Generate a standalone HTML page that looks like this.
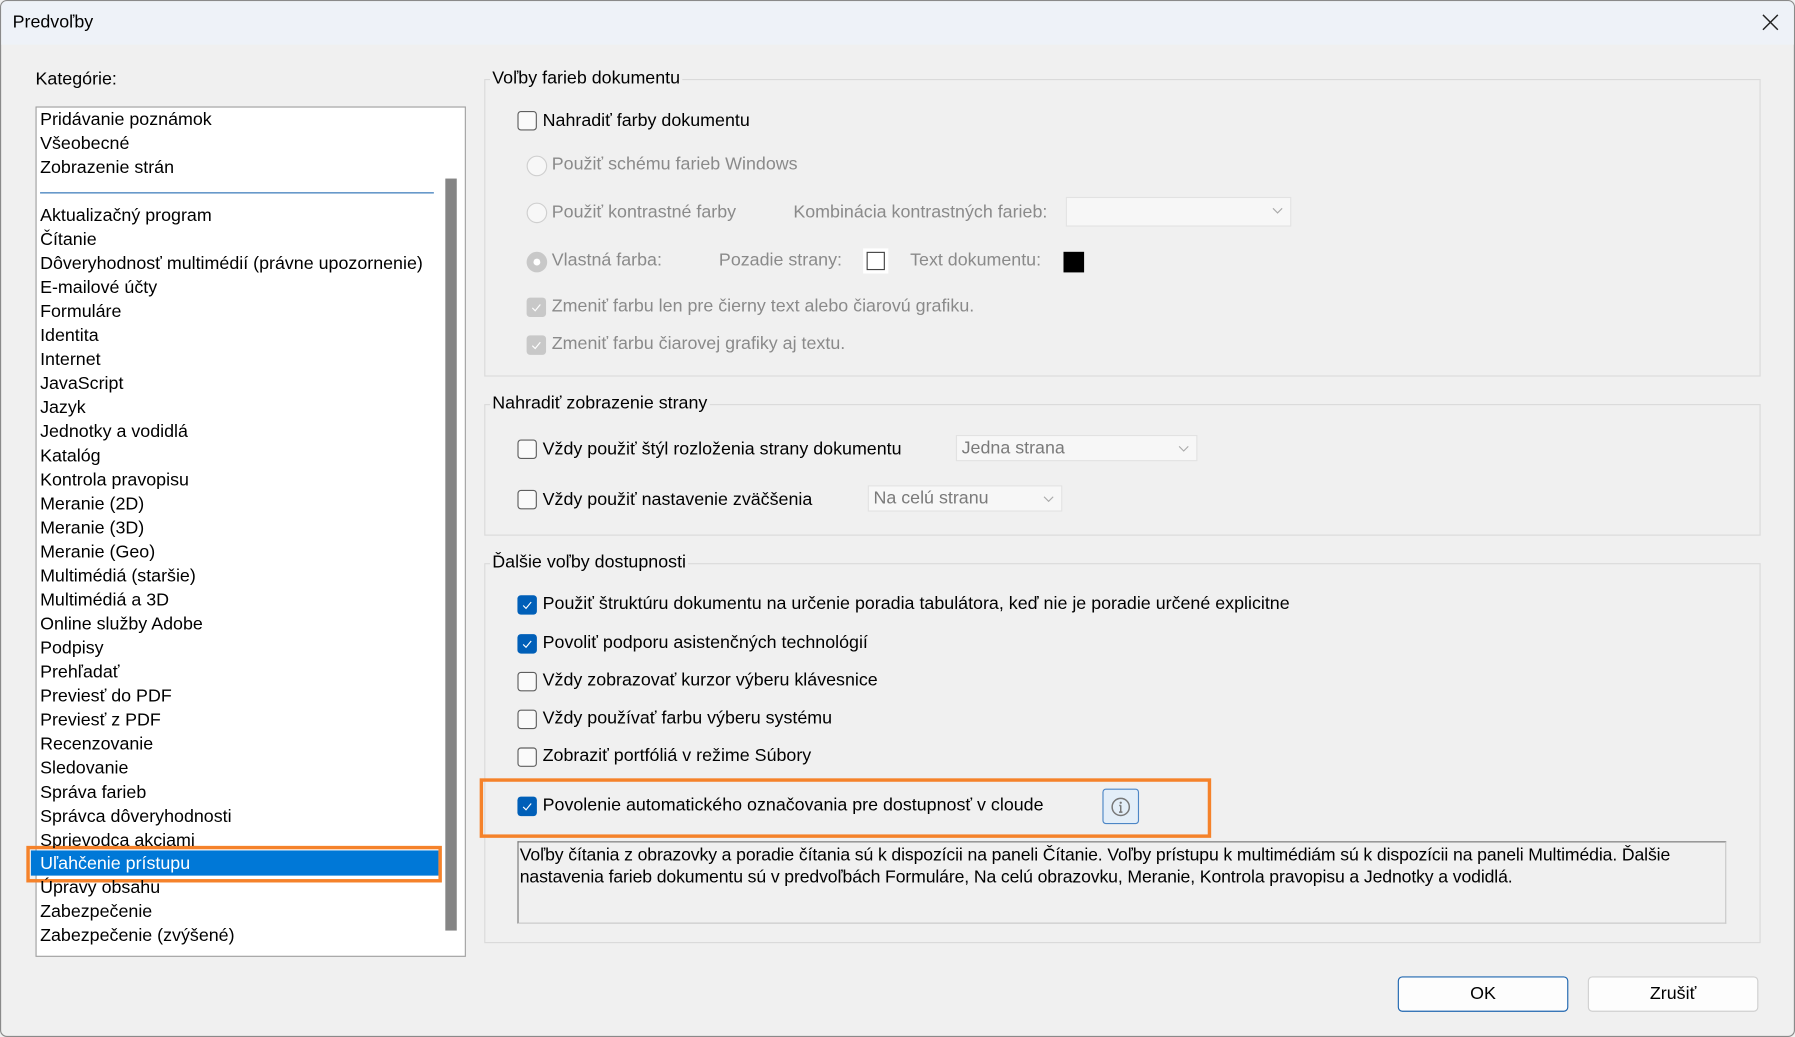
<!DOCTYPE html>
<html><head><meta charset="utf-8"><style>
html,body{margin:0;padding:0;width:1795px;height:1037px;overflow:hidden;background:#f0f0f0}
#w{position:absolute;left:0;top:0;width:1568px;height:906px;transform:scale(1.14477,1.1446);transform-origin:0 0;background:#f0f0f0;font-family:"Liberation Sans",sans-serif;font-size:15.6px;color:#000;border:1px solid #8a8a8a;box-sizing:border-box;border-radius:6px;overflow:hidden}
.a{position:absolute;white-space:nowrap}
.t{position:absolute;white-space:nowrap;line-height:18px}
.g{color:#8a8a8a}
.cb{position:absolute;width:15px;height:15px;border:1px solid #5f5f5f;border-radius:3px;background:#fafafa}
.cbc{position:absolute;width:17px;height:17px;border-radius:3px;background:#005fb8}
.cbd{position:absolute;width:17px;height:17px;border-radius:3px;background:#c8c8c8}
.cbc svg,.cbd svg{position:absolute;left:2px;top:2px}
.rd{position:absolute;width:16px;height:16px;border:1px solid #cfcfcf;border-radius:50%;background:#f7f7f7}
.fr{position:absolute;border:1px solid #dadada}
.lbl{position:absolute;background:#f0f0f0;padding:0 2px;line-height:18px}
.dd{position:absolute;background:#f7f7f7;border:1px solid #e2e2e2;box-sizing:border-box;color:#7a7a7a;line-height:22px;padding-left:4px}
.dd svg{position:absolute;right:6px;top:8px}
.it{position:absolute;left:34px;line-height:21px}
.btn{position:absolute;background:#fdfdfd;border:1px solid #d0d0d0;border-radius:4px;box-sizing:border-box;text-align:center;line-height:29px}
</style></head><body><div id="w">
<div class="a" style="left:0;top:0;width:1568px;height:38px;background:#eef2f8"></div>
<div class="t" style="left:10px;top:10px">Predvoľby</div>
<svg class="a" style="left:1538px;top:11px" width="15" height="15"><path d="M1 1L14 14M14 1L1 14" stroke="#222" stroke-width="1.3"/></svg>

<div class="t" style="left:30px;top:60px">Kategórie:</div>
<div class="a" style="left:30px;top:92px;width:374px;height:741px;background:#fff;border:1px solid #a0a0a0"></div>
<div class="a" style="left:388px;top:155px;width:10px;height:657px;background:#858585"></div>
<div class="a" style="left:34px;top:167px;width:344px;height:1px;background:#2a6fb5"></div>
<div class="a" style="left:26px;top:742px;width:356px;height:22px;background:#0078d7"></div>
<div class="a" style="left:22px;top:738px;width:357px;height:26px;border:3px solid #f5822a"></div>
<div class="it" style="top:93px">Pridávanie poznámok</div>
<div class="it" style="top:114px">Všeobecné</div>
<div class="it" style="top:135px">Zobrazenie strán</div>
<div class="it" style="top:177px">Aktualizačný program</div>
<div class="it" style="top:198px">Čítanie</div>
<div class="it" style="top:219px">Dôveryhodnosť multimédií (právne upozornenie)</div>
<div class="it" style="top:240px">E-mailové účty</div>
<div class="it" style="top:261px">Formuláre</div>
<div class="it" style="top:282px">Identita</div>
<div class="it" style="top:303px">Internet</div>
<div class="it" style="top:324px">JavaScript</div>
<div class="it" style="top:345px">Jazyk</div>
<div class="it" style="top:366px">Jednotky a vodidlá</div>
<div class="it" style="top:387px">Katalóg</div>
<div class="it" style="top:408px">Kontrola pravopisu</div>
<div class="it" style="top:429px">Meranie (2D)</div>
<div class="it" style="top:450px">Meranie (3D)</div>
<div class="it" style="top:471px">Meranie (Geo)</div>
<div class="it" style="top:492px">Multimédiá (staršie)</div>
<div class="it" style="top:513px">Multimédiá a 3D</div>
<div class="it" style="top:534px">Online služby Adobe</div>
<div class="it" style="top:555px">Podpisy</div>
<div class="it" style="top:576px">Prehľadať</div>
<div class="it" style="top:597px">Previesť do PDF</div>
<div class="it" style="top:618px">Previesť z PDF</div>
<div class="it" style="top:639px">Recenzovanie</div>
<div class="it" style="top:660px">Sledovanie</div>
<div class="it" style="top:681px">Správa farieb</div>
<div class="it" style="top:702px">Správca dôveryhodnosti</div>
<div class="it" style="top:723px;height:17px;overflow:hidden">Sprievodca akciami</div>
<div class="it" style="top:743px;color:#fff">Uľahčenie prístupu</div>
<div class="it" style="top:765px;height:19px;overflow:hidden"><span style="position:relative;top:-1px">Úpravy obsahu</span></div>
<div class="it" style="top:785px">Zabezpečenie</div>
<div class="it" style="top:806px">Zabezpečenie (zvýšené)</div>

<!-- group 1 -->
<div class="fr" style="left:422px;top:68px;width:1113px;height:258px"></div>
<div class="lbl" style="left:427px;top:59px">Voľby farieb dokumentu</div>
<div class="cb" style="left:451px;top:96px"></div>
<div class="t" style="left:473px;top:96px">Nahradiť farby dokumentu</div>
<div class="rd" style="left:459px;top:135px"></div>
<div class="t g" style="left:481px;top:134px">Použiť schému farieb Windows</div>
<div class="rd" style="left:459px;top:176px"></div>
<div class="t g" style="left:481px;top:176px">Použiť kontrastné farby</div>
<div class="t g" style="left:692px;top:176px">Kombinácia kontrastných farieb:</div>
<div class="dd" style="left:930px;top:171px;width:197px;height:26px"><svg width="10" height="6"><path d="M1 1L5 5L9 1" stroke="#aaa" fill="none"/></svg></div>
<div class="rd" style="left:459px;top:219px;background:#c8c8c8;border-color:#c8c8c8"><div style="position:absolute;left:5px;top:5px;width:6px;height:6px;border-radius:50%;background:#fff"></div></div>
<div class="t g" style="left:481px;top:218px">Vlastná farba:</div>
<div class="t g" style="left:627px;top:218px">Pozadie strany:</div>
<div class="a" style="left:753px;top:216px;width:22px;height:22px;background:#fff"></div>
<div class="a" style="left:756px;top:219px;width:14px;height:14px;border:1.5px solid #444"></div>
<div class="t g" style="left:794px;top:218px">Text dokumentu:</div>
<div class="a" style="left:928px;top:219px;width:18px;height:18px;background:#000"></div>
<div class="cbd" style="left:459px;top:259px"><svg width="13" height="13"><path d="M3 7L5.5 9.5L10 4" stroke="#fff" fill="none"/></svg></div>
<div class="t g" style="left:481px;top:258px">Zmeniť farbu len pre čierny text alebo čiarovú grafiku.</div>
<div class="cbd" style="left:459px;top:292px"><svg width="13" height="13"><path d="M3 7L5.5 9.5L10 4" stroke="#fff" fill="none"/></svg></div>
<div class="t g" style="left:481px;top:291px">Zmeniť farbu čiarovej grafiky aj textu.</div>

<!-- group 2 -->
<div class="fr" style="left:422px;top:352px;width:1113px;height:113px"></div>
<div class="lbl" style="left:427px;top:343px">Nahradiť zobrazenie strany</div>
<div class="cb" style="left:451px;top:383px"></div>
<div class="t" style="left:473px;top:383px">Vždy použiť štýl rozloženia strany dokumentu</div>
<div class="dd" style="left:834px;top:379px;width:211px;height:23px;line-height:21px">Jedna strana<svg width="10" height="6"><path d="M1 1L5 5L9 1" stroke="#aaa" fill="none"/></svg></div>
<div class="cb" style="left:451px;top:427px"></div>
<div class="t" style="left:473px;top:427px">Vždy použiť nastavenie zväčšenia</div>
<div class="dd" style="left:757px;top:423px;width:170px;height:23px;line-height:21px">Na celú stranu<svg width="10" height="6"><path d="M1 1L5 5L9 1" stroke="#aaa" fill="none"/></svg></div>

<!-- group 3 -->
<div class="fr" style="left:422px;top:491px;width:1113px;height:330px"></div>
<div class="lbl" style="left:427px;top:482px">Ďalšie voľby dostupnosti</div>
<div class="cbc" style="left:451px;top:519px"><svg width="13" height="13"><path d="M3 7L5.5 9.5L10 4" stroke="#fff" fill="none"/></svg></div>
<div class="t" style="left:473px;top:518px">Použiť štruktúru dokumentu na určenie poradia tabulátora, keď nie je poradie určené explicitne</div>
<div class="cbc" style="left:451px;top:553px"><svg width="13" height="13"><path d="M3 7L5.5 9.5L10 4" stroke="#fff" fill="none"/></svg></div>
<div class="t" style="left:473px;top:552px">Povoliť podporu asistenčných technológií</div>
<div class="cb" style="left:451px;top:586px"></div>
<div class="t" style="left:473px;top:585px">Vždy zobrazovať kurzor výberu klávesnice</div>
<div class="cb" style="left:451px;top:619px"></div>
<div class="t" style="left:473px;top:618px">Vždy používať farbu výberu systému</div>
<div class="cb" style="left:451px;top:652px"></div>
<div class="t" style="left:473px;top:651px">Zobraziť portfóliá v režime Súbory</div>
<div class="a" style="left:418px;top:679px;width:633px;height:46px;border:3px solid #f5822a"></div>
<div class="cbc" style="left:451px;top:695px"><svg width="13" height="13"><path d="M3 7L5.5 9.5L10 4" stroke="#fff" fill="none"/></svg></div>
<div class="t" style="left:473px;top:694px">Povolenie automatického označovania pre dostupnosť v cloude</div>
<div class="a" style="left:962px;top:688px;width:30px;height:29px;background:#e3eef8;border:1px solid #4c86c6;border-radius:3px"><svg style="position:absolute;left:6px;top:6px" width="18" height="18"><circle cx="9" cy="9" r="7.5" stroke="#777" fill="none" stroke-width="1.3"/><circle cx="9" cy="5.3" r="1" fill="#777"/><path d="M9 7.5V13.5M7.5 13.5H10.5M7.7 7.7H9" stroke="#777" stroke-width="1.3" fill="none"/></svg></div>
<div class="a" style="left:451px;top:734px;width:1054px;height:70px;border:1px solid #c8c8c8;border-left:1.5px solid #777;border-top:1.5px solid #777"></div>
<div class="t" style="left:453px;top:737px;font-size:15.4px;line-height:19px;letter-spacing:-0.1px">Voľby čítania z obrazovky a poradie čítania sú k dispozícii na paneli Čítanie. Voľby prístupu k multimédiám sú k dispozícii na paneli Multimédia. Ďalšie<br>nastavenia farieb dokumentu sú v predvoľbách Formuláre, Na celú obrazovku, Meranie, Kontrola pravopisu a Jednotky a vodidlá.</div>

<div class="btn" style="left:1220px;top:852px;width:149px;height:31px;border-color:#1f66b0">OK</div>
<div class="btn" style="left:1386px;top:852px;width:149px;height:31px">Zrušiť</div>
</div></body></html>
